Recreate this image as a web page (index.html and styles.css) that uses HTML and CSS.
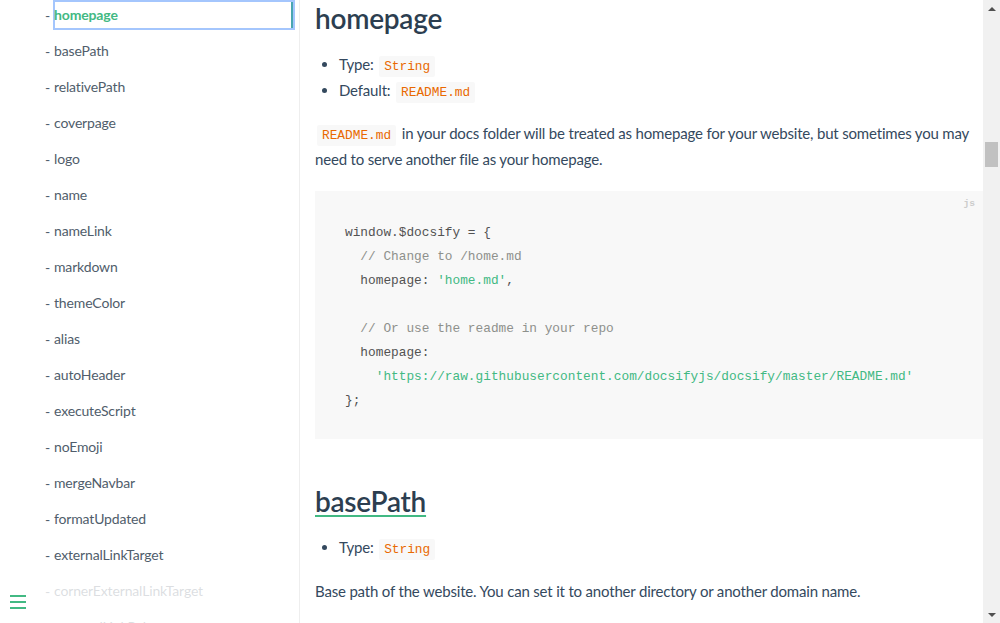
FILE: index.html
```html
<!DOCTYPE html>
<html lang="en">
<head>
<meta charset="utf-8">
<title>Configuration - docsify</title>
<link rel="stylesheet" href="styles.css">
</head>
<body>
<div class="app">
  <aside class="sidebar">
    <ul class="nav">
      <li class="nav-item active"><span class="dash">-</span><a class="nav-link">homepage</a></li>
      <li class="nav-item"><span class="dash">-</span><a class="nav-link">basePath</a></li>
      <li class="nav-item"><span class="dash">-</span><a class="nav-link">relativePath</a></li>
      <li class="nav-item"><span class="dash">-</span><a class="nav-link">coverpage</a></li>
      <li class="nav-item"><span class="dash">-</span><a class="nav-link">logo</a></li>
      <li class="nav-item"><span class="dash">-</span><a class="nav-link">name</a></li>
      <li class="nav-item"><span class="dash">-</span><a class="nav-link">nameLink</a></li>
      <li class="nav-item"><span class="dash">-</span><a class="nav-link">markdown</a></li>
      <li class="nav-item"><span class="dash">-</span><a class="nav-link">themeColor</a></li>
      <li class="nav-item"><span class="dash">-</span><a class="nav-link">alias</a></li>
      <li class="nav-item"><span class="dash">-</span><a class="nav-link">autoHeader</a></li>
      <li class="nav-item"><span class="dash">-</span><a class="nav-link">executeScript</a></li>
      <li class="nav-item"><span class="dash">-</span><a class="nav-link">noEmoji</a></li>
      <li class="nav-item"><span class="dash">-</span><a class="nav-link">mergeNavbar</a></li>
      <li class="nav-item"><span class="dash">-</span><a class="nav-link">formatUpdated</a></li>
      <li class="nav-item"><span class="dash">-</span><a class="nav-link">externalLinkTarget</a></li>
      <li class="nav-item"><span class="dash">-</span><a class="nav-link">cornerExternalLinkTarget</a></li>
      <li class="nav-item"><span class="dash">-</span><a class="nav-link">externalLinkRel</a></li>
    </ul>
    <button class="sidebar-toggle" aria-label="Toggle sidebar">
      <span class="bar"></span><span class="bar"></span><span class="bar"></span>
    </button>
  </aside>

  <main class="content">
    <article class="markdown">
      <h2 class="heading">homepage</h2>
      <ul class="props">
        <li>Type: <code class="inline">String</code></li>
        <li>Default: <code class="inline">README.md</code></li>
      </ul>
      <p class="para"><code class="inline">README.md</code> in your docs folder will be treated as homepage for your website, but sometimes you may need to serve another file as your homepage.</p>
      <div class="codeblock">
        <span class="lang">js</span>
<pre class="pre"><code class="pre-code">window.$docsify = {
  <span class="tk-comment">// Change to /home.md</span>
  homepage: <span class="tk-string">'home.md'</span>,

  <span class="tk-comment">// Or use the readme in your repo</span>
  homepage:
    <span class="tk-string">'https://raw.githubusercontent.com/docsifyjs/docsify/master/README.md'</span>
};</code></pre>
      </div>

      <h2 class="heading heading-link"><a class="anchor">basePath</a></h2>
      <ul class="props">
        <li>Type: <code class="inline">String</code></li>
      </ul>
      <p class="para">Base path of the website. You can set it to another directory or another domain name.</p>
      <div class="codeblock">
<pre class="pre"><code class="pre-code">window.$docsify = {
  basePath: <span class="tk-string">'/path/'</span>,
};</code></pre>
      </div>
    </article>
  </main>

  <div class="scrollbar" aria-hidden="true">
    <div class="sb-btn"><span class="arrow-up"></span></div>
    <div class="sb-track"><div class="sb-thumb"></div></div>
    <div class="sb-btn"><span class="arrow-down"></span></div>
  </div>
</div>
</body>
</html>
```

FILE: styles.css
```css
html, body {
  margin: 0;
  padding: 0;
  height: 100%;
  overflow: hidden;
  background: #fff;
}

body {
  font-family: Lato, "Noto Sans", sans-serif;
  font-size: 15px;
  letter-spacing: -0.18px;
  color: #34495e;
}

.app {
  display: flex;
  height: 623px;
}

/* Sidebar */
.sidebar {
  position: relative;
  width: 299px;
  flex: 0 0 299px;
  border-right: 1px solid #eee;
  overflow: hidden;
}

.nav {
  list-style: none;
  margin: 0;
  padding: 0;
  display: flex;
  flex-direction: column;
  gap: 6px;
}

.nav-item {
  display: flex;
  align-items: center;
  height: 30px;
  padding-left: 45px;
  font-size: 14px;
  letter-spacing: -0.15px;
  color: #505d6b;
}

.dash {
  width: 8px;
  flex: 0 0 8px;
}

.nav-link {
  flex: 1;
  margin-right: 4px;
  height: 30px;
  line-height: 30px;
  padding-left: 1px;
  color: #505d6b;
  box-sizing: border-box;
}

.nav-item.active .nav-link {
  color: #42b983;
  font-weight: 700;
  box-shadow: inset 0 0 0 2px #a4c6fd, inset -2px 0 0 2px #4aa6b0;
}

.sidebar-toggle {
  position: absolute;
  left: 0;
  bottom: 0;
  width: 284px;
  height: 38px;
  padding: 10px;
  border: 0;
  margin: 0;
  background: rgba(255, 255, 255, 0.8);
  display: flex;
  flex-direction: column;
  gap: 4px;
  box-sizing: border-box;
}

.bar {
  display: block;
  width: 16px;
  height: 2px;
  background: #42b983;
}

/* Content */
.content {
  flex: 1;
  min-width: 0;
  overflow: hidden;
}

.markdown {
  padding: 0 0 0 15px;
}

.heading {
  margin: 0;
  font-size: 28px;
  line-height: 36px;
  font-weight: 600;
  letter-spacing: -0.25px;
  color: #2c3e50;
}

.heading-link {
  margin-top: 44px;
}

.anchor {
  color: #2c3e50;
  text-decoration: underline;
  text-decoration-color: #42b983;
  text-decoration-thickness: 2px;
  text-underline-offset: 3px;
}

.props {
  margin: 16px 0 0;
  padding-left: 24px;
}

.props li {
  line-height: 25.6px;
}

.para {
  margin: 18px 0 0;
  line-height: 25.6px;
}

.inline {
  font-family: "Liberation Mono", "DejaVu Sans Mono", monospace;
  font-size: 12.8px;
  line-height: 1;
  letter-spacing: 0;
  color: #e96900;
  background: #f8f8f8;
  border-radius: 2px;
  padding: 3px 5px;
  margin: 0 2px;
}

.codeblock {
  position: relative;
  margin-top: 19px;
  background: #f8f8f8;
}

.lang {
  position: absolute;
  top: 0;
  right: 0;
  padding: 5px 8px 0;
  font-family: "Liberation Mono", "DejaVu Sans Mono", monospace;
  font-size: 9.6px;
  line-height: 15px;
  font-weight: 700;
  letter-spacing: 0;
  color: #ccc;
}

.pre {
  margin: 0;
  padding: 30px 30px 26px;
  font-family: "Liberation Mono", "DejaVu Sans Mono", monospace;
  font-size: 12.8px;
  line-height: 24px;
  letter-spacing: 0;
  color: #525252;
  white-space: pre;
  overflow: hidden;
}

.pre-code {
  font-family: inherit;
  font-size: inherit;
  line-height: inherit;
}

.tk-comment { color: #8e908c; }
.tk-string { color: #42b983; }

/* Scrollbar */
.scrollbar {
  width: 17px;
  flex: 0 0 17px;
  background: #f1f1f1;
  display: flex;
  flex-direction: column;
}

.sb-btn {
  height: 17px;
  display: flex;
  align-items: center;
  justify-content: center;
}

.arrow-up {
  width: 0;
  height: 0;
  border-left: 4px solid transparent;
  border-right: 4px solid transparent;
  border-bottom: 4px solid #505050;
}

.arrow-down {
  width: 0;
  height: 0;
  border-left: 4px solid transparent;
  border-right: 4px solid transparent;
  border-top: 4px solid #505050;
}

.sb-track {
  flex: 1;
}

.sb-thumb {
  margin: 125px 2px 0;
  height: 25px;
  background: #c1c1c1;
}
```
